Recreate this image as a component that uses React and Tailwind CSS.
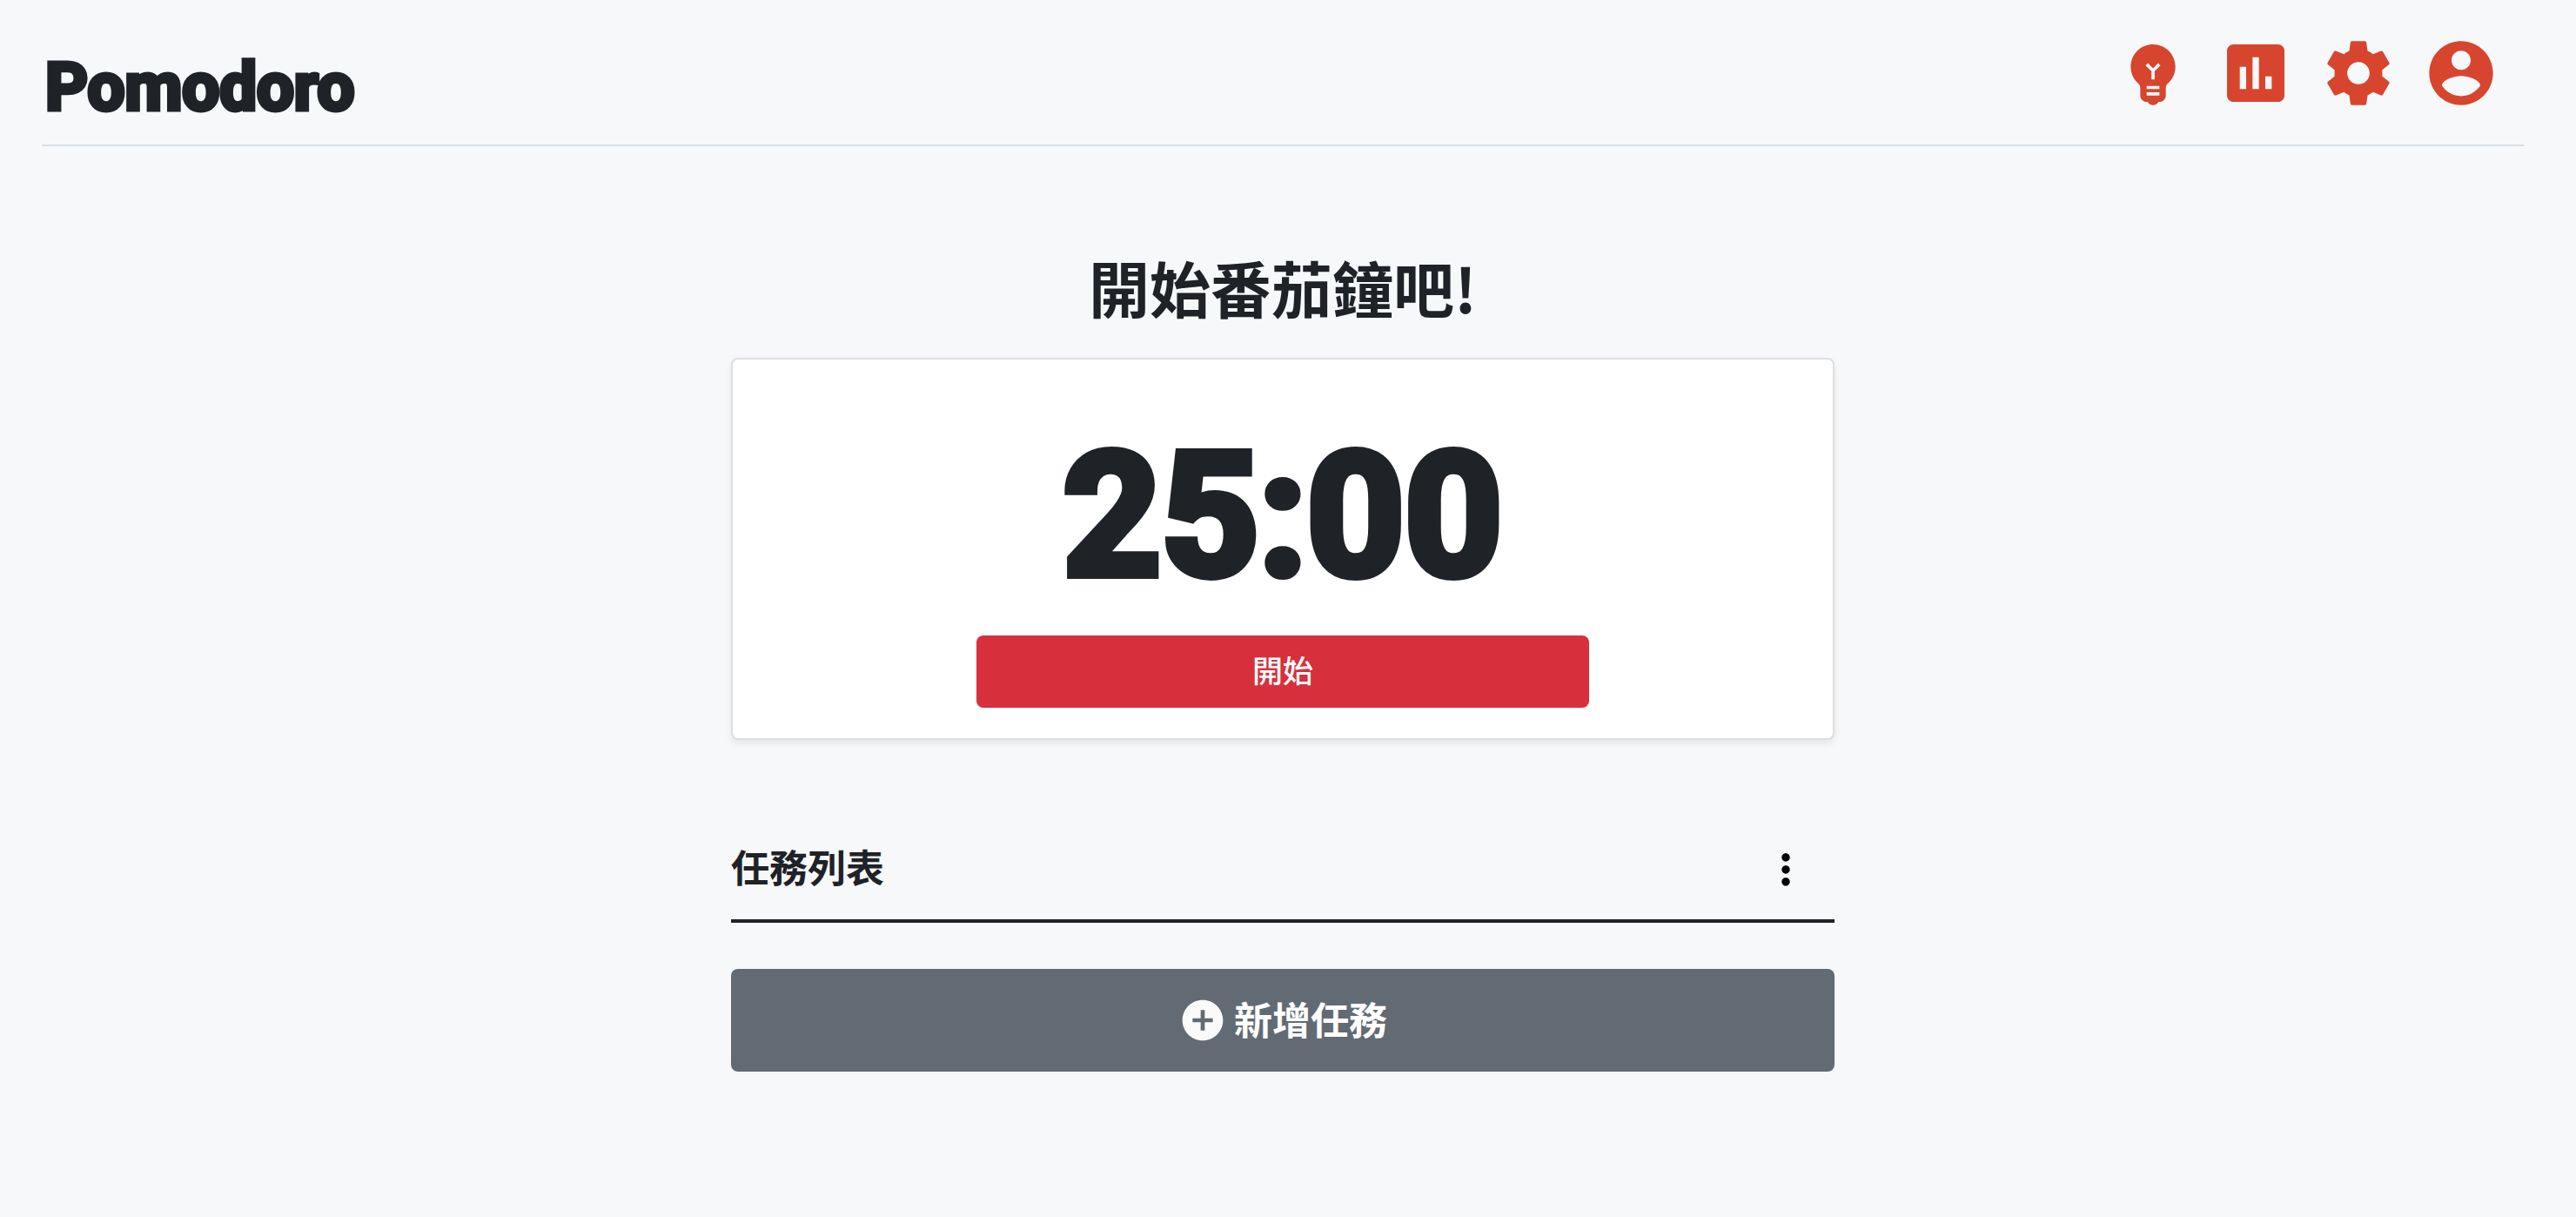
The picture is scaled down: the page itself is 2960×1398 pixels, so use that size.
const PATHS = {
  bulb: "M12 3c-.46 0-.93.04-1.4.14-2.76.53-4.96 2.76-5.48 5.52-.48 2.61.48 5.01 2.22 6.56.43.38.66.91.66 1.47V19c0 1.1.9 2 2 2h.28c.35.6.98 1 1.72 1s1.38-.4 1.72-1H14c1.1 0 2-.9 2-2v-2.31c0-.55.22-1.09.64-1.46C18.09 13.95 19 12.08 19 10c0-3.87-3.13-7-7-7zm2 16h-4v-1h4v1zm0-2h-4v-1h4v1zm-1.5-5.59V14h-1v-2.59L9.67 9.59l.71-.71L12 10.5l1.62-1.62.71.71-1.83 1.82z",
  chart: "M19 3H5c-1.1 0-2 .9-2 2v14c0 1.1.9 2 2 2h14c1.1 0 2-.9 2-2V5c0-1.1-.9-2-2-2zM9 17H7v-7h2v7zm4 0h-2V7h2v10zm4 0h-2v-4h2v4z",
  gear: "M19.43 12.98c.04-.32.07-.64.07-.98s-.03-.66-.07-.98l2.11-1.65c.19-.15.24-.42.12-.64l-2-3.46c-.12-.22-.39-.3-.61-.22l-2.49 1c-.52-.4-1.08-.73-1.69-.98l-.38-2.65C14.46 2.18 14.25 2 14 2h-4c-.25 0-.46.18-.49.42l-.38 2.65c-.61.25-1.17.59-1.69.98l-2.49-1c-.23-.09-.49 0-.61.22l-2 3.46c-.13.22-.07.49.12.64l2.11 1.65c-.04.32-.07.65-.07.98s.03.66.07.98l-2.11 1.65c-.19.15-.24.42-.12.64l2 3.46c.12.22.39.3.61.22l2.49-1c.52.4 1.08.73 1.69.98l.38 2.65c.03.24.24.42.49.42h4c.25 0 .46-.18.49-.42l.38-2.65c.61-.25 1.17-.59 1.69-.98l2.49 1c.23.09.49 0 .61-.22l2-3.46c.12-.22.07-.49-.12-.64l-2.11-1.65zM12 15.5c-1.93 0-3.5-1.57-3.5-3.5s1.57-3.5 3.5-3.5 3.5 1.57 3.5 3.5-1.57 3.5-3.5 3.5z",
  account: "M12 2C6.48 2 2 6.48 2 12s4.48 10 10 10 10-4.48 10-10S17.52 2 12 2zm0 3c1.66 0 3 1.34 3 3s-1.34 3-3 3-3-1.34-3-3 1.34-3 3-3zm0 14.2c-2.5 0-4.71-1.28-6-3.22.03-1.99 4-3.08 6-3.08 1.99 0 5.97 1.09 6 3.08-1.29 1.94-3.5 3.22-6 3.22z",
  more: "M12 8c1.1 0 2-.9 2-2s-.9-2-2-2-2 .9-2 2 .9 2 2 2zm0 2c-1.1 0-2 .9-2 2s.9 2 2 2 2-.9 2-2-.9-2-2-2zm0 6c-1.1 0-2 .9-2 2s.9 2 2 2 2-.9 2-2-.9-2-2-2z",
  add: "M12 2C6.48 2 2 6.48 2 12s4.48 10 10 10 10-4.48 10-10S17.52 2 12 2zm5 11h-4v4h-2v-4H7v-2h4V7h2v4h4v2z",
};

function Icon({ name, className }) {
  return (
    <svg viewBox="0 0 24 24" fill="currentColor" aria-hidden="true" className={className}>
      <path d={PATHS[name]} />
    </svg>
  );
}

const NAV = [
  ["bulb", "使用說明"],
  ["chart", "統計"],
  ["gear", "設定"],
  ["account", "帳號"],
];

export default function App() {
  return (
    <div className="min-h-screen bg-[#f7f8fa] px-12 font-['Noto_Sans_CJK_TC',sans-serif] text-[#1f2227]">
      <header className="mr-3 flex h-[168px] items-center justify-between border-b-2 border-[#d6dee3] pt-0.5 pr-7">
        <h1 className="pt-8 pl-1 font-['Roboto',sans-serif] text-[76px] leading-none font-bold [-webkit-text-stroke:5px_currentColor]">
          Pomodoro
        </h1>
        <nav className="flex gap-[30px]">
          {NAV.map(([name, label]) => (
            <button key={name} type="button" aria-label={label} className="text-[#d8452e]">
              <Icon name={name} className="size-[88px]" />
            </button>
          ))}
        </nav>
      </header>

      <main className="mr-3 flex flex-col items-center pt-[114px]">
        <div className="w-full max-w-[1268px]">
          <h2 className="text-center text-[70px] leading-[96px] font-bold">開始番茄鐘吧!</h2>
          <section className="mt-[33px] flex flex-col items-center rounded-lg border-2 border-[#dedee0] bg-white pt-[75px] pb-[35px] shadow-[0_4px_8px_rgba(0,0,0,0.075)]">
            <time className="font-['Roboto',sans-serif] text-[196px] leading-[210px] font-bold [-webkit-text-stroke:10px_currentColor]">
              25:00
            </time>
            <button type="button" className="mt-8 h-[83px] w-[704px] rounded-lg bg-[#d72f3b] pb-1 text-[35px] font-medium text-white">
              開始
            </button>
          </section>

          <div className="mt-[100px] flex h-[110px] items-center justify-between border-b-4 border-[#1f2227] pr-7 pb-3">
            <h3 className="pb-1 text-[44px] leading-[64px] font-bold">任務列表</h3>
            <button type="button" aria-label="更多選項" className="pt-1 text-black">
              <Icon name="more" className="size-14" />
            </button>
          </div>

          <button type="button" className="mt-[53px] flex h-[118px] w-full items-center justify-center gap-2 rounded-lg bg-[#626a73] text-[44px] font-bold text-white">
            <Icon name="add" className="size-14 text-[#fafafa]" />
            <span className="pb-1">新增任務</span>
          </button>
        </div>
      </main>
    </div>
  );
}
